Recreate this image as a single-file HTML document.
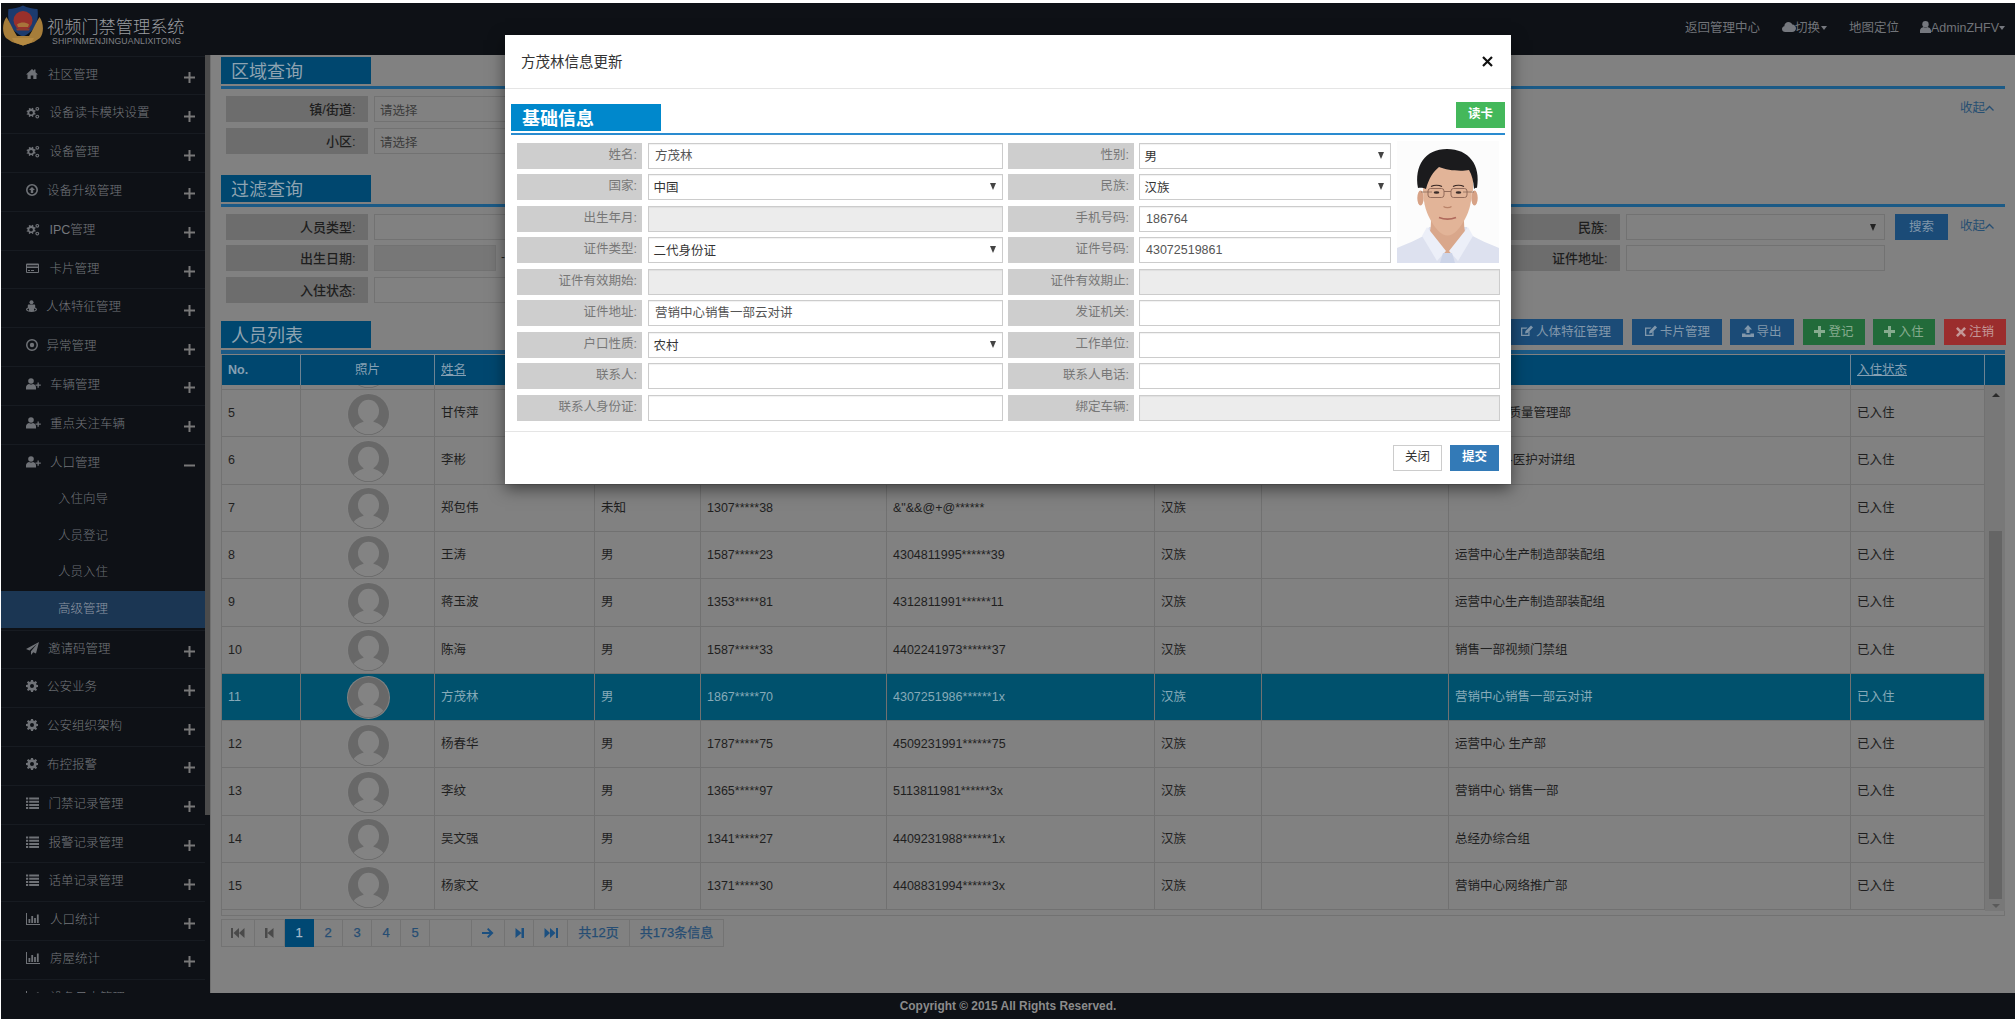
<!DOCTYPE html><html lang="zh-CN"><head><meta charset="utf-8"><title>视频门禁管理系统</title><style>
*{box-sizing:border-box}
html,body{margin:0;padding:0}
body{width:2016px;height:1019px;overflow:hidden;background:#fff;font-family:"Liberation Sans","Noto Sans CJK SC",sans-serif;font-size:12px;position:relative}
.a{position:absolute}
.t{position:absolute;white-space:nowrap}
.nav{color:#717479;font-size:12.5px;line-height:20px;top:18px}
.mi{position:absolute;left:1px;width:204px;height:39px;border-top:1px solid #171b21;color:#74777c;font-size:12.5px;font-weight:300}
.mi .tx{position:absolute;top:9px;line-height:18px;white-space:nowrap}
.mi svg.ic{position:absolute;left:25px;top:11px}
.mi .pl{position:absolute;left:183px;top:15.600px;width:11px;height:11px}
.sub{position:absolute;left:1px;width:204px;height:37px;color:#6b6f75;font-size:12.5px;font-weight:300;line-height:36px;padding-left:57px;white-space:nowrap}
.sub.act{background:#1b3653;color:#8f98a3}
.sec{position:absolute;width:150px;height:27px;background:#00476f;color:#8ea3b1;font-size:18px;line-height:31px;padding-left:10px;white-space:nowrap;overflow:hidden}
.ul{position:absolute;height:2.5px;background:#1b5a86}
.lb{position:absolute;background:#6d6d6d;color:#1e1e1e;font-size:13px;font-weight:500;text-align:right;padding-right:12.5px;white-space:nowrap}
.in{position:absolute;background:#818181;border:1px solid #727272;color:#3c3c3c;font-size:12.5px;padding-left:5px;white-space:nowrap}
.btn{position:absolute;height:26px;line-height:26px;color:#8197ab;font-size:12.5px;text-align:center;white-space:nowrap}
.th{position:absolute;top:355px;height:30px;line-height:31px;color:#86a0b3;font-size:12.5px;border-right:1px solid #6d8393;padding-left:6px;white-space:nowrap;background:#00476f}
.row{position:absolute;left:222px;width:1763px;height:47.3px;border-bottom:1px solid #717171;color:#1f1f1f;font-size:12.5px}
.row.sel{background:#00516d;color:#86aab8}
.c{position:absolute;top:0;height:47.3px;line-height:47.5px;padding-left:6px;border-right:1px solid #717171;white-space:nowrap;overflow:hidden}
.pg{-webkit-text-stroke:0.25px;position:absolute;top:919px;height:28px;line-height:26px;border:1px solid #737373;border-left:none;text-align:center;color:#264d73;font-size:13px;white-space:nowrap}
.ml{position:absolute;background:#cecece;color:#777;font-size:12.5px;text-align:right;padding-right:5px;white-space:nowrap;height:26px;line-height:25px}
.mn{position:absolute;background:#fff;border:1px solid #ccc;color:#555;font-size:12.5px;padding-left:6px;white-space:nowrap;height:26px;line-height:24.500px;overflow:hidden;box-shadow:inset 0 1px 1px rgba(0,0,0,.06)}
.mn.dis{background:#ececec}
.mn.sl{color:#333;line-height:27px;padding-left:4.500px}
.mn .ar{position:absolute;right:6px;top:8px;width:0;height:0;border-left:3.5px solid transparent;border-right:3.5px solid transparent;border-top:7px solid #444}
</style></head><body>
<svg width="0" height="0" style="position:absolute"><defs>
<symbol id="av" viewBox="0 0 42 42"><circle cx="21" cy="21" r="21" fill="#838383"/><circle cx="21" cy="21" r="20" fill="#686868"/><clipPath id="avc"><circle cx="21" cy="21" r="19.300"/></clipPath><g clip-path="url(#avc)" fill="#838383"><ellipse cx="21" cy="17.500" rx="10.300" ry="11"/><path d="M16 26h10v5H16z"/><path d="M4 42c0-9 7-12.500 12-14 1.500 1.500 3 2 5 2s3.500-.5 5-2c5 1.500 12 5 12 14z"/></g></symbol>
<symbol id="plus" viewBox="0 0 11 11"><path d="M4.500 0h2v4.500H11v2H6.500V11h-2V6.500H0v-2h4.500z"/></symbol>
<symbol id="minus" viewBox="0 0 11 11"><path d="M0 4.500h11v2H0z"/></symbol>
</defs></svg>
<div class="a " style="left:1px;top:3px;width:2014px;height:52px;background:#0e1116"></div>
<div class="a " style="left:1px;top:55px;width:208.5px;height:938px;background:#0e1116"></div>
<div class="a " style="left:205px;top:55px;width:4.5px;height:760px;background:#4b4b4b"></div>
<div class="a " style="left:209.5px;top:55px;width:1805.5px;height:938px;background:#818181"></div>
<div class="a " style="left:209.5px;top:55px;width:1.5px;height:938px;background:#707070"></div>
<div class="a " style="left:1px;top:993px;width:2014px;height:26px;background:#0e1116;color:#8b8b8b;font-size:11.900px;font-weight:bold;line-height:27px;text-align:center">Copyright © 2015 All Rights Reserved.</div>
<svg class="a" style="left:3px;top:5px" width="40" height="41" viewBox="0 0 40 41">
<path d="M20 .5C16 3 9.500 3.800 5.500 4 4 15 7 26 20 31.500 33 26 36 15 34.500 4 30.500 3.800 24 3 20 .5z" fill="#1c3b6e"/>
<circle cx="20" cy="15.500" r="9.500" fill="#99302b"/>
<path d="M14 19.500c2-1.500 4-2 6-2s4 .5 6 2l-1 2.500H15z" fill="#a8743a"/>
<path d="M13 23.500h14l-1 2H14z" fill="#8c3a2c"/>
<path d="M3.500 12C-1 18-1 28 3 33l6 4 11 3.500 11-3.500 6-4c4-5 4-15-.5-21-2.500 4-5.500 10-7.500 14l-3 5H14l-3-5C9 22 6 16 3.500 12z" fill="#a67d3a"/>
<path d="M9 33h22l-2.500 4.500L20 40.500l-8.500-3z" fill="#b58a42"/>
</svg>
<div class="t" style="left:47px;top:15px;font-size:17.2px;line-height:24px;color:#9b9da1;letter-spacing:0px;font-weight:300">视频门禁管理系统</div>
<div class="t" style="left:52px;top:36px;font-size:8.700px;line-height:11px;color:#808287;letter-spacing:0.100px">SHIPINMENJINGUANLIXITONG</div>
<div class="t nav" style="left:1685px">返回管理中心</div>
<svg class="a" style="left:1782px;top:21px" width="14" height="11" viewBox="0 0 14 11"><path d="M3.200 11C1.400 11 0 9.700 0 8c0-1.400 1-2.500 2.300-2.800C2.300 2.800 4.200 1 6.500 1c1.700 0 3.200 1 3.800 2.500C12.400 3.600 14 5.200 14 7.200 14 9.300 12.300 11 10.200 11z" fill="#75787e"/></svg>
<div class="t nav" style="left:1795px">切换</div>
<div class="a" style="left:1821px;top:26px;width:0;height:0;border-left:3.500px solid transparent;border-right:3.500px solid transparent;border-top:4px solid #75787e"></div>
<div class="t nav" style="left:1849px">地图定位</div>
<svg class="a" style="left:1920px;top:21px" width="11" height="12" viewBox="0 0 11 12"><circle cx="5.500" cy="3.200" r="3.200" fill="#75787e"/><path d="M0 12V9.500C0 7.500 2 6.300 3.500 6c.6.500 1.300.7 2 .7s1.400-.2 2-.7C9 6.300 11 7.500 11 9.500V12z" fill="#75787e"/></svg>
<div class="t nav" style="left:1931px;font-size:12.500px">AdminZHFV</div>
<div class="a" style="left:1999px;top:26px;width:0;height:0;border-left:3.500px solid transparent;border-right:3.500px solid transparent;border-top:4px solid #75787e"></div>
<div class="mi" style="top:55.5px"><svg class="ic" width="15" height="13" viewBox="0 0 15 13" fill="#6f7277"><path d="M6 1L0 6.500h1.500V11h3.200V7.500h2.600V11h3.200V6.500H12L9.500 4.200V1.500H8v1.300z"/></svg><span class="tx" style="left:47px">社区管理</span><svg class="pl" fill="#787878"><use href="#plus"/></svg></div>
<div class="mi" style="top:94.3px"><svg class="ic" width="15" height="13" viewBox="0 0 15 13" fill="#6f7277"><path fill-rule="evenodd" d="M4.500 2.500l1.200.2.500-1 1.200.5-.2 1.100.9.900 1.100-.2.500 1.200-1 .5v1.300l1 .6-.5 1.200-1.100-.3-.9.900.2 1.100-1.200.5-.5-1H4.500l-.6 1-1.200-.5.300-1.100-.9-.9-1.100.3L.500 8l1-.6V6.100l-1-.5L1 4.400l1.100.2.900-.9-.3-1.100 1.200-.5zM5.100 5A1.800 1.800 0 1 0 5.100 8.600 1.800 1.800 0 0 0 5.100 5z"/><circle cx="11.300" cy="2.800" r="1.900"/><circle cx="11.300" cy="10.600" r="1.900"/><circle cx="11.300" cy="2.800" r=".8" fill="#0e1116"/><circle cx="11.300" cy="10.600" r=".8" fill="#0e1116"/></svg><span class="tx" style="left:48.5px">设备读卡模块设置</span><svg class="pl" fill="#787878"><use href="#plus"/></svg></div>
<div class="mi" style="top:133.1px"><svg class="ic" width="15" height="13" viewBox="0 0 15 13" fill="#6f7277"><path fill-rule="evenodd" d="M4.500 2.500l1.200.2.500-1 1.200.5-.2 1.100.9.900 1.100-.2.500 1.200-1 .5v1.300l1 .6-.5 1.200-1.100-.3-.9.900.2 1.100-1.200.5-.5-1H4.500l-.6 1-1.200-.5.300-1.100-.9-.9-1.100.3L.500 8l1-.6V6.100l-1-.5L1 4.400l1.100.2.900-.9-.3-1.100 1.200-.5zM5.100 5A1.800 1.800 0 1 0 5.100 8.600 1.800 1.800 0 0 0 5.100 5z"/><circle cx="11.300" cy="2.800" r="1.900"/><circle cx="11.300" cy="10.600" r="1.900"/><circle cx="11.300" cy="2.800" r=".8" fill="#0e1116"/><circle cx="11.300" cy="10.600" r=".8" fill="#0e1116"/></svg><span class="tx" style="left:48.5px">设备管理</span><svg class="pl" fill="#787878"><use href="#plus"/></svg></div>
<div class="mi" style="top:171.9px"><svg class="ic" width="15" height="13" viewBox="0 0 15 13" fill="#6f7277"><path fill-rule="evenodd" d="M6 0a6 6 0 1 0 0 12A6 6 0 0 0 6 0zm0 1.600a4.400 4.400 0 1 1 0 8.800 4.400 4.400 0 0 1 0-8.800zM6 3L3 6h1.800v3h2.400V6H9z"/></svg><span class="tx" style="left:46px">设备升级管理</span><svg class="pl" fill="#787878"><use href="#plus"/></svg></div>
<div class="mi" style="top:210.7px"><svg class="ic" width="15" height="13" viewBox="0 0 15 13" fill="#6f7277"><path fill-rule="evenodd" d="M4.500 2.500l1.200.2.500-1 1.200.5-.2 1.100.9.900 1.100-.2.500 1.200-1 .5v1.300l1 .6-.5 1.200-1.100-.3-.9.900.2 1.100-1.200.5-.5-1H4.500l-.6 1-1.200-.5.300-1.100-.9-.9-1.100.3L.500 8l1-.6V6.100l-1-.5L1 4.400l1.100.2.900-.9-.3-1.100 1.200-.5zM5.100 5A1.800 1.800 0 1 0 5.100 8.600 1.800 1.800 0 0 0 5.100 5z"/><circle cx="11.300" cy="2.800" r="1.900"/><circle cx="11.300" cy="10.600" r="1.900"/><circle cx="11.300" cy="2.800" r=".8" fill="#0e1116"/><circle cx="11.300" cy="10.600" r=".8" fill="#0e1116"/></svg><span class="tx" style="left:48.5px">IPC管理</span><svg class="pl" fill="#787878"><use href="#plus"/></svg></div>
<div class="mi" style="top:249.5px"><svg class="ic" width="15" height="13" viewBox="0 0 15 13" fill="#6f7277"><path fill-rule="evenodd" d="M1 1.500h11a1 1 0 0 1 1 1v7.500a1 1 0 0 1-1 1H1a1 1 0 0 1-1-1V2.500a1 1 0 0 1 1-1zM1 3.200v1.300h11V3.200zM1 6v4h11V6zM2 8h2v1H2zm3 0h3v1H5z"/></svg><span class="tx" style="left:48.5px">卡片管理</span><svg class="pl" fill="#787878"><use href="#plus"/></svg></div>
<div class="mi" style="top:288.3px"><svg class="ic" width="15" height="13" viewBox="0 0 15 13" fill="#6f7277"><circle cx="5.500" cy="2.200" r="2"/><path d="M2.800 4.500h5.400c.6 0 1 .4 1 1v3H8v2.500H3V8.500H1.800v-3c0-.6.4-1 1-1z"/><path d="M0 9.500c0-1 1-1.600 2.500-1.900v.9C1.700 8.700 1.200 9 1.200 9.500c0 .8 2 1.500 4.300 1.500s4.300-.7 4.300-1.500c0-.5-.5-.8-1.300-1v-.9C10 7.900 11 8.500 11 9.500c0 1.500-2.500 2.500-5.500 2.500S0 11 0 9.500z"/></svg><span class="tx" style="left:45px">人体特征管理</span><svg class="pl" fill="#787878"><use href="#plus"/></svg></div>
<div class="mi" style="top:327.1px"><svg class="ic" width="15" height="13" viewBox="0 0 15 13" fill="#6f7277"><path fill-rule="evenodd" d="M6 0a6 6 0 1 0 0 12A6 6 0 0 0 6 0zm0 1.500a4.500 4.500 0 1 1 0 9 4.500 4.500 0 0 1 0-9z"/><circle cx="6" cy="6" r="2.200"/></svg><span class="tx" style="left:45.5px">异常管理</span><svg class="pl" fill="#787878"><use href="#plus"/></svg></div>
<div class="mi" style="top:365.9px"><svg class="ic" width="15" height="13" viewBox="0 0 15 13" fill="#6f7277"><circle cx="5" cy="3" r="2.800"/><path d="M0 11.500V9.300C0 7.400 1.800 6.300 3.200 6c.5.400 1.100.600 1.800.600S6.300 6.400 6.800 6C8.200 6.300 10 7.400 10 9.300v2.200z"/><path d="M11.500 4.500h1.300v2h2v1.300h-2v2h-1.300v-2h-2V6.500h2z"/></svg><span class="tx" style="left:49px">车辆管理</span><svg class="pl" fill="#787878"><use href="#plus"/></svg></div>
<div class="mi" style="top:404.7px"><svg class="ic" width="15" height="13" viewBox="0 0 15 13" fill="#6f7277"><circle cx="5" cy="3" r="2.800"/><path d="M0 11.500V9.300C0 7.400 1.800 6.300 3.200 6c.5.400 1.100.600 1.800.600S6.300 6.400 6.800 6C8.200 6.300 10 7.400 10 9.300v2.200z"/><path d="M11.500 4.500h1.300v2h2v1.300h-2v2h-1.300v-2h-2V6.500h2z"/></svg><span class="tx" style="left:49px">重点关注车辆</span><svg class="pl" fill="#787878"><use href="#plus"/></svg></div>
<div class="mi" style="top:443.5px"><svg class="ic" width="15" height="13" viewBox="0 0 15 13" fill="#6f7277"><circle cx="5" cy="3" r="2.800"/><path d="M0 11.500V9.300C0 7.400 1.800 6.300 3.200 6c.5.400 1.100.600 1.800.600S6.300 6.400 6.800 6C8.200 6.300 10 7.400 10 9.300v2.200z"/><path d="M11.500 4.500h1.300v2h2v1.300h-2v2h-1.300v-2h-2V6.500h2z"/></svg><span class="tx" style="left:49px">人口管理</span><svg class="pl" fill="#787878"><use href="#minus"/></svg></div>
<div class="sub" style="top:481.0px">入住向导</div>
<div class="sub" style="top:517.7px">人员登记</div>
<div class="sub" style="top:554.4px">人员入住</div>
<div class="sub act" style="top:591.1px">高级管理</div>
<div class="mi" style="top:629.5px"><svg class="ic" width="15" height="13" viewBox="0 0 15 13" fill="#6f7277"><path d="M13 0L0 7l3.500 1.500L11 2 5 9.300V13l2.300-2.800L10 11.500z"/></svg><span class="tx" style="left:47px">邀请码管理</span><svg class="pl" fill="#787878"><use href="#plus"/></svg></div>
<div class="mi" style="top:668.3px"><svg class="ic" width="15" height="13" viewBox="0 0 15 13" fill="#6f7277"><path fill-rule="evenodd" d="M5 0h2l.3 1.600 1 .4L9.700 1l1.400 1.400L10 3.700l.4 1L12 5v2l-1.600.3-.4 1 1.100 1.400L9.700 11 8.300 10l-1 .4L7 12H5l-.3-1.600-1-.4L2.300 11 .9 9.700 2 8.300l-.4-1L0 7V5l1.600-.3.4-1L.9 2.400 2.300 1l1.400 1 1-.4zM6 4a2 2 0 1 0 0 4 2 2 0 0 0 0-4z"/></svg><span class="tx" style="left:46px">公安业务</span><svg class="pl" fill="#787878"><use href="#plus"/></svg></div>
<div class="mi" style="top:707.1px"><svg class="ic" width="15" height="13" viewBox="0 0 15 13" fill="#6f7277"><path fill-rule="evenodd" d="M5 0h2l.3 1.600 1 .4L9.700 1l1.400 1.400L10 3.700l.4 1L12 5v2l-1.600.3-.4 1 1.100 1.400L9.700 11 8.300 10l-1 .4L7 12H5l-.3-1.600-1-.4L2.300 11 .9 9.700 2 8.300l-.4-1L0 7V5l1.600-.3.4-1L.9 2.400 2.300 1l1.400 1 1-.4zM6 4a2 2 0 1 0 0 4 2 2 0 0 0 0-4z"/></svg><span class="tx" style="left:46px">公安组织架构</span><svg class="pl" fill="#787878"><use href="#plus"/></svg></div>
<div class="mi" style="top:745.9px"><svg class="ic" width="15" height="13" viewBox="0 0 15 13" fill="#6f7277"><path fill-rule="evenodd" d="M5 0h2l.3 1.600 1 .4L9.700 1l1.400 1.400L10 3.700l.4 1L12 5v2l-1.600.3-.4 1 1.100 1.400L9.700 11 8.300 10l-1 .4L7 12H5l-.3-1.600-1-.4L2.300 11 .9 9.700 2 8.300l-.4-1L0 7V5l1.600-.3.4-1L.9 2.400 2.300 1l1.400 1 1-.4zM6 4a2 2 0 1 0 0 4 2 2 0 0 0 0-4z"/></svg><span class="tx" style="left:46px">布控报警</span><svg class="pl" fill="#787878"><use href="#plus"/></svg></div>
<div class="mi" style="top:784.7px"><svg class="ic" width="15" height="13" viewBox="0 0 15 13" fill="#6f7277"><path d="M0 .5h2.200v2H0zm3.200 0H13v2H3.200zM0 3.700h2.200v2H0zm3.200 0H13v2H3.200zM0 6.900h2.200v2H0zm3.200 0H13v2H3.200zM0 10.100h2.200v2H0zm3.200 0H13v2H3.200z"/></svg><span class="tx" style="left:47.5px">门禁记录管理</span><svg class="pl" fill="#787878"><use href="#plus"/></svg></div>
<div class="mi" style="top:823.5px"><svg class="ic" width="15" height="13" viewBox="0 0 15 13" fill="#6f7277"><path d="M0 .5h2.200v2H0zm3.200 0H13v2H3.200zM0 3.700h2.200v2H0zm3.200 0H13v2H3.200zM0 6.900h2.200v2H0zm3.200 0H13v2H3.200zM0 10.100h2.200v2H0zm3.200 0H13v2H3.200z"/></svg><span class="tx" style="left:47.5px">报警记录管理</span><svg class="pl" fill="#787878"><use href="#plus"/></svg></div>
<div class="mi" style="top:862.3px"><svg class="ic" width="15" height="13" viewBox="0 0 15 13" fill="#6f7277"><path d="M0 .5h2.200v2H0zm3.200 0H13v2H3.200zM0 3.700h2.200v2H0zm3.200 0H13v2H3.200zM0 6.900h2.200v2H0zm3.200 0H13v2H3.200zM0 10.100h2.200v2H0zm3.200 0H13v2H3.200z"/></svg><span class="tx" style="left:47.5px">话单记录管理</span><svg class="pl" fill="#787878"><use href="#plus"/></svg></div>
<div class="mi" style="top:901.1px"><svg class="ic" width="15" height="13" viewBox="0 0 15 13" fill="#6f7277"><path d="M0 0h1v11h13v1H0zM2.500 6h1.800v4H2.500zM5.300 3h1.800v7H5.300zM8.100 5h1.800v5H8.100zM10.900 1.500h1.800V10h-1.800z"/></svg><span class="tx" style="left:49px">人口统计</span><svg class="pl" fill="#787878"><use href="#plus"/></svg></div>
<div class="mi" style="top:939.9px"><svg class="ic" width="15" height="13" viewBox="0 0 15 13" fill="#6f7277"><path d="M0 0h1v11h13v1H0zM2.500 6h1.800v4H2.500zM5.300 3h1.800v7H5.300zM8.100 5h1.800v5H8.100zM10.900 1.500h1.800V10h-1.800z"/></svg><span class="tx" style="left:49px">房屋统计</span><svg class="pl" fill="#787878"><use href="#plus"/></svg></div>
<div class="mi" style="top:978.7px"><svg class="ic" width="15" height="13" viewBox="0 0 15 13" fill="#6f7277"><path d="M0 0h1v11h13v1H0zM2.500 6h1.800v4H2.500zM5.300 3h1.800v7H5.300zM8.100 5h1.800v5H8.100zM10.900 1.500h1.800V10h-1.800z"/></svg><span class="tx" style="left:49px">设备日志管理</span><svg class="pl" fill="#787878"><use href="#plus"/></svg></div>
<div class="a " style="left:1px;top:993px;width:204px;height:26px;background:#0e1116"></div>
<div class="sec" style="left:221px;top:57px">区域查询</div>
<div class="ul" style="left:221px;top:86px;width:1784px"></div>
<div class="sec" style="left:221px;top:175px">过滤查询</div>
<div class="ul" style="left:221px;top:204px;width:1784px"></div>
<div class="sec" style="left:221px;top:321px">人员列表</div>
<div class="ul" style="left:221px;top:350.300px;width:1784px;height:3.700px"></div>
<div class="lb" style="left:226px;top:96px;width:142px;height:26px;line-height:27.5px;overflow:hidden">镇/街道:</div>
<div class="in" style="left:374px;top:96px;width:260px;height:26px;line-height:28px;overflow:hidden;">请选择</div>
<div class="lb" style="left:226px;top:128px;width:142px;height:26px;line-height:27.5px;overflow:hidden">小区:</div>
<div class="in" style="left:374px;top:128px;width:260px;height:26px;line-height:28px;overflow:hidden;">请选择</div>
<div class="lb" style="left:226px;top:214px;width:142px;height:26px;line-height:27.5px;overflow:hidden">人员类型:</div>
<div class="in" style="left:374px;top:214px;width:260px;height:26px;line-height:28px;overflow:hidden;"></div>
<div class="lb" style="left:226px;top:245px;width:142px;height:26px;line-height:27.5px;overflow:hidden">出生日期:</div>
<div class="in" style="left:374px;top:245px;width:122px;height:26px;line-height:28px;overflow:hidden;background:#777"></div>
<div class="t" style="left:501px;top:250px;color:#222">-</div>
<div class="in" style="left:510px;top:245px;width:124px;height:26px;line-height:28px;overflow:hidden;background:#777"></div>
<div class="lb" style="left:226px;top:277px;width:142px;height:26px;line-height:27.5px;overflow:hidden">入住状态:</div>
<div class="in" style="left:374px;top:277px;width:260px;height:26px;line-height:28px;overflow:hidden;"></div>
<div class="lb" style="left:1380px;top:214px;width:240px;height:26px;line-height:27.5px;overflow:hidden">民族:</div>
<div class="in" style="left:1626px;top:214px;width:259px;height:26px;line-height:28px;overflow:hidden;"></div>
<div class="a" style="left:1870px;top:224px;width:0;height:0;border-left:3.500px solid transparent;border-right:3.500px solid transparent;border-top:7px solid #222"></div>
<div class="lb" style="left:1380px;top:245px;width:240px;height:26px;line-height:27.5px;overflow:hidden">证件地址:</div>
<div class="in" style="left:1626px;top:245px;width:259px;height:26px;line-height:28px;overflow:hidden;"></div>
<div class="btn" style="left:1895px;top:214px;width:53px;height:26px;line-height:26px;background:#1b4b77">搜索</div>
<div class="t" style="left:1960px;top:99px;color:#274f72;font-size:12.5px;line-height:18px">收起</div>
<svg class="a" style="left:1985px;top:105px" width="9" height="6" viewBox="0 0 9 6"><path d="M.5 5.500L4.500 1.500 8.500 5.500" fill="none" stroke="#274f72" stroke-width="1.300"/></svg>
<div class="t" style="left:1960px;top:217px;color:#274f72;font-size:12.5px;line-height:18px">收起</div>
<svg class="a" style="left:1985px;top:223px" width="9" height="6" viewBox="0 0 9 6"><path d="M.5 5.500L4.500 1.500 8.500 5.500" fill="none" stroke="#274f72" stroke-width="1.300"/></svg>
<div class="btn" style="left:1508px;top:318.500px;width:115px;background:#1b4b77"><svg width="13" height="12" viewBox="0 0 13 12" style="vertical-align:-1px;margin-right:3px"><path d="M1 2.500h6.500l-1.300 1.300H2.300v6h6V7.300l1.300-1.300V11H1z" fill="#8197ab"/><path d="M5 8.500L5.500 6 11 .5 13 2.500 7.500 8z" fill="#8197ab"/></svg>人体特征管理</div>
<div class="btn" style="left:1632px;top:318.500px;width:90px;background:#1b4b77"><svg width="13" height="12" viewBox="0 0 13 12" style="vertical-align:-1px;margin-right:3px"><path d="M1 2.500h6.500l-1.300 1.300H2.300v6h6V7.300l1.300-1.300V11H1z" fill="#8197ab"/><path d="M5 8.500L5.500 6 11 .5 13 2.500 7.500 8z" fill="#8197ab"/></svg>卡片管理</div>
<div class="btn" style="left:1730px;top:318.500px;width:64px;background:#1b4b77"><svg width="12" height="12" viewBox="0 0 12 12" style="vertical-align:-1px;margin-right:2px"><path d="M6 0l4 4.500H7.500V8h-3V4.500H2z" fill="#8197ab"/><path d="M0 8.500h3.500V9.500h5V8.500H12V12H0z" fill="#8197ab"/></svg>导出</div>
<div class="btn" style="left:1803px;top:318.500px;width:62px;background:#226b3a;color:#86ab8e"><svg width="11" height="11" viewBox="0 0 11 11" style="vertical-align:-1px;margin-right:3px"><path d="M4 0h3v4h4v3H7v4H4V7H0V4h4z" fill="#86ab8e"/></svg>登记</div>
<div class="btn" style="left:1873px;top:318.500px;width:62px;background:#226b3a;color:#86ab8e"><svg width="11" height="11" viewBox="0 0 11 11" style="vertical-align:-1px;margin-right:3px"><path d="M4 0h3v4h4v3H7v4H4V7H0V4h4z" fill="#86ab8e"/></svg>入住</div>
<div class="btn" style="left:1944px;top:318.500px;width:62px;background:#9b2d2d;color:#c49797"><svg width="10" height="10" viewBox="0 0 10 10" style="vertical-align:-1px;margin-right:3px"><path d="M1.800 0L5 3.200 8.200 0 10 1.800 6.800 5 10 8.200 8.200 10 5 6.800 1.800 10 0 8.200 3.200 5 0 1.800z" fill="#c49797"/></svg>注销</div>
<div class="a " style="left:221px;top:355px;width:1784px;height:561px;border:1px solid #727272"></div>
<div class="th" style="left:222px;width:79px;font-weight:bold;">No.</div>
<div class="th" style="left:301px;width:134px;text-align:center;padding-left:0;">照片</div>
<div class="th" style="left:435px;width:160px;"><u>姓名</u></div>
<div class="th" style="left:595px;width:106px;"><u>性别</u></div>
<div class="th" style="left:701px;width:186px;"><u>手机号码</u></div>
<div class="th" style="left:887px;width:268px;"><u>证件号码</u></div>
<div class="th" style="left:1155px;width:107px;"><u>民族</u></div>
<div class="th" style="left:1262px;width:187px;"><u>出生日期</u></div>
<div class="th" style="left:1449px;width:402px;"><u>证件地址</u></div>
<div class="th" style="left:1851px;width:134px;"><u>入住状态</u></div>
<div class="a " style="left:1985px;top:355px;width:20px;height:30px;background:#00476f"></div>
<div class="a" style="left:222px;top:385px;width:1763px;height:5px;overflow:hidden"><div style="position:absolute;top:-42px;left:-222px">
<div class="row" style="top:0.0px;"><div class="c" style="left:0px;width:79px">4</div><div class="c" style="left:79px;width:134px;padding:0"><svg width="43" height="43" style="position:absolute;left:46.0px;top:2.500px"><use href="#av"/></svg></div><div class="c" style="left:213px;width:160px"></div><div class="c" style="left:373px;width:106px"></div><div class="c" style="left:479px;width:186px"></div><div class="c" style="left:665px;width:268px"></div><div class="c" style="left:933px;width:107px"></div><div class="c" style="left:1040px;width:187px"></div><div class="c" style="left:1227px;width:402px"></div><div class="c" style="left:1629px;width:134px">已入住</div></div>
</div></div>
<div class="row" style="top:390.1px;"><div class="c" style="left:0px;width:79px">5</div><div class="c" style="left:79px;width:134px;padding:0"><svg width="43" height="43" style="position:absolute;left:46.0px;top:2.500px"><use href="#av"/></svg></div><div class="c" style="left:213px;width:160px">甘传萍</div><div class="c" style="left:373px;width:106px">男</div><div class="c" style="left:479px;width:186px">1367*****12</div><div class="c" style="left:665px;width:268px">4305211989******58</div><div class="c" style="left:933px;width:107px">汉族</div><div class="c" style="left:1040px;width:187px"></div><div class="c" style="left:1227px;width:402px"><span style="padding-left:3.500px">运营中心质量管理部</span></div><div class="c" style="left:1629px;width:134px">已入住</div></div>
<div class="row" style="top:437.4px;"><div class="c" style="left:0px;width:79px">6</div><div class="c" style="left:79px;width:134px;padding:0"><svg width="43" height="43" style="position:absolute;left:46.0px;top:2.500px"><use href="#av"/></svg></div><div class="c" style="left:213px;width:160px">李彬</div><div class="c" style="left:373px;width:106px">男</div><div class="c" style="left:479px;width:186px">1592*****46</div><div class="c" style="left:665px;width:268px">4306241990******17</div><div class="c" style="left:933px;width:107px">汉族</div><div class="c" style="left:1040px;width:187px"></div><div class="c" style="left:1227px;width:402px"><span style="padding-left:3.500px">销售一部-医护对讲组</span></div><div class="c" style="left:1629px;width:134px">已入住</div></div>
<div class="row" style="top:484.7px;"><div class="c" style="left:0px;width:79px">7</div><div class="c" style="left:79px;width:134px;padding:0"><svg width="43" height="43" style="position:absolute;left:46.0px;top:2.500px"><use href="#av"/></svg></div><div class="c" style="left:213px;width:160px">郑包伟</div><div class="c" style="left:373px;width:106px">未知</div><div class="c" style="left:479px;width:186px">1307*****38</div><div class="c" style="left:665px;width:268px">&amp;&quot;&amp;&amp;@+@******</div><div class="c" style="left:933px;width:107px">汉族</div><div class="c" style="left:1040px;width:187px"></div><div class="c" style="left:1227px;width:402px"></div><div class="c" style="left:1629px;width:134px">已入住</div></div>
<div class="row" style="top:532.0px;"><div class="c" style="left:0px;width:79px">8</div><div class="c" style="left:79px;width:134px;padding:0"><svg width="43" height="43" style="position:absolute;left:46.0px;top:2.500px"><use href="#av"/></svg></div><div class="c" style="left:213px;width:160px">王涛</div><div class="c" style="left:373px;width:106px">男</div><div class="c" style="left:479px;width:186px">1587*****23</div><div class="c" style="left:665px;width:268px">4304811995******39</div><div class="c" style="left:933px;width:107px">汉族</div><div class="c" style="left:1040px;width:187px"></div><div class="c" style="left:1227px;width:402px">运营中心生产制造部装配组</div><div class="c" style="left:1629px;width:134px">已入住</div></div>
<div class="row" style="top:579.3px;"><div class="c" style="left:0px;width:79px">9</div><div class="c" style="left:79px;width:134px;padding:0"><svg width="43" height="43" style="position:absolute;left:46.0px;top:2.500px"><use href="#av"/></svg></div><div class="c" style="left:213px;width:160px">蒋玉波</div><div class="c" style="left:373px;width:106px">男</div><div class="c" style="left:479px;width:186px">1353*****81</div><div class="c" style="left:665px;width:268px">4312811991******11</div><div class="c" style="left:933px;width:107px">汉族</div><div class="c" style="left:1040px;width:187px"></div><div class="c" style="left:1227px;width:402px">运营中心生产制造部装配组</div><div class="c" style="left:1629px;width:134px">已入住</div></div>
<div class="row" style="top:626.5px;"><div class="c" style="left:0px;width:79px">10</div><div class="c" style="left:79px;width:134px;padding:0"><svg width="43" height="43" style="position:absolute;left:46.0px;top:2.500px"><use href="#av"/></svg></div><div class="c" style="left:213px;width:160px">陈海</div><div class="c" style="left:373px;width:106px">男</div><div class="c" style="left:479px;width:186px">1587*****33</div><div class="c" style="left:665px;width:268px">4402241973******37</div><div class="c" style="left:933px;width:107px">汉族</div><div class="c" style="left:1040px;width:187px"></div><div class="c" style="left:1227px;width:402px">销售一部视频门禁组</div><div class="c" style="left:1629px;width:134px">已入住</div></div>
<div class="row sel" style="top:673.8px;"><div class="c" style="left:0px;width:79px">11</div><div class="c" style="left:79px;width:134px;padding:0"><svg width="43" height="43" style="position:absolute;left:46.0px;top:2.500px"><use href="#av"/></svg></div><div class="c" style="left:213px;width:160px">方茂林</div><div class="c" style="left:373px;width:106px">男</div><div class="c" style="left:479px;width:186px">1867*****70</div><div class="c" style="left:665px;width:268px">4307251986******1x</div><div class="c" style="left:933px;width:107px">汉族</div><div class="c" style="left:1040px;width:187px"></div><div class="c" style="left:1227px;width:402px">营销中心销售一部云对讲</div><div class="c" style="left:1629px;width:134px">已入住</div></div>
<div class="row" style="top:721.1px;"><div class="c" style="left:0px;width:79px">12</div><div class="c" style="left:79px;width:134px;padding:0"><svg width="43" height="43" style="position:absolute;left:46.0px;top:2.500px"><use href="#av"/></svg></div><div class="c" style="left:213px;width:160px">杨春华</div><div class="c" style="left:373px;width:106px">男</div><div class="c" style="left:479px;width:186px">1787*****75</div><div class="c" style="left:665px;width:268px">4509231991******75</div><div class="c" style="left:933px;width:107px">汉族</div><div class="c" style="left:1040px;width:187px"></div><div class="c" style="left:1227px;width:402px">运营中心 生产部</div><div class="c" style="left:1629px;width:134px">已入住</div></div>
<div class="row" style="top:768.4px;"><div class="c" style="left:0px;width:79px">13</div><div class="c" style="left:79px;width:134px;padding:0"><svg width="43" height="43" style="position:absolute;left:46.0px;top:2.500px"><use href="#av"/></svg></div><div class="c" style="left:213px;width:160px">李纹</div><div class="c" style="left:373px;width:106px">男</div><div class="c" style="left:479px;width:186px">1365*****97</div><div class="c" style="left:665px;width:268px">5113811981******3x</div><div class="c" style="left:933px;width:107px">汉族</div><div class="c" style="left:1040px;width:187px"></div><div class="c" style="left:1227px;width:402px">营销中心 销售一部</div><div class="c" style="left:1629px;width:134px">已入住</div></div>
<div class="row" style="top:815.7px;"><div class="c" style="left:0px;width:79px">14</div><div class="c" style="left:79px;width:134px;padding:0"><svg width="43" height="43" style="position:absolute;left:46.0px;top:2.500px"><use href="#av"/></svg></div><div class="c" style="left:213px;width:160px">吴文强</div><div class="c" style="left:373px;width:106px">男</div><div class="c" style="left:479px;width:186px">1341*****27</div><div class="c" style="left:665px;width:268px">4409231988******1x</div><div class="c" style="left:933px;width:107px">汉族</div><div class="c" style="left:1040px;width:187px"></div><div class="c" style="left:1227px;width:402px">总经办综合组</div><div class="c" style="left:1629px;width:134px">已入住</div></div>
<div class="row" style="top:863.0px;"><div class="c" style="left:0px;width:79px">15</div><div class="c" style="left:79px;width:134px;padding:0"><svg width="43" height="43" style="position:absolute;left:46.0px;top:2.500px"><use href="#av"/></svg></div><div class="c" style="left:213px;width:160px">杨家文</div><div class="c" style="left:373px;width:106px">男</div><div class="c" style="left:479px;width:186px">1371*****30</div><div class="c" style="left:665px;width:268px">4408831994******3x</div><div class="c" style="left:933px;width:107px">汉族</div><div class="c" style="left:1040px;width:187px"></div><div class="c" style="left:1227px;width:402px">营销中心网络推广部</div><div class="c" style="left:1629px;width:134px">已入住</div></div>
<div class="a " style="left:1985px;top:385px;width:20px;height:526px;background:#787878"></div>
<div class="a " style="left:1989px;top:531px;width:13px;height:368px;background:#656565"></div>
<div class="a" style="left:1992px;top:393px;width:0;height:0;border-left:4px solid transparent;border-right:4px solid transparent;border-bottom:4px solid #2a2a2a"></div>
<div class="a" style="left:1992px;top:904px;width:0;height:0;border-left:4px solid transparent;border-right:4px solid transparent;border-top:4px solid #5a5a5a"></div>
<div class="pg" style="left:221px;width:34px;border-left:1px solid #737373;"><svg width="14" height="10" viewBox="0 0 14 10" fill="#4a4a4a" style="vertical-align:-1px"><path d="M0 0h2v10H0zM8 0v10L2.500 5zM13.500 0v10L8 5z"/></svg></div>
<div class="pg" style="left:255px;width:30px;"><svg width="9" height="10" viewBox="0 0 9 10" fill="#4a4a4a" style="vertical-align:-1px"><path d="M0 0h2.500v10H0zM8.500 0v10L2.500 5z"/></svg></div>
<div class="pg" style="left:285px;width:29px;background:#004873;color:#a5b9c9;border-color:#004873;">1</div>
<div class="pg" style="left:314px;width:29px;">2</div>
<div class="pg" style="left:343px;width:29px;">3</div>
<div class="pg" style="left:372px;width:29px;">4</div>
<div class="pg" style="left:401px;width:29px;">5</div>
<div class="pg" style="left:430px;width:42px;"></div>
<div class="pg" style="left:472px;width:33px;"><svg width="12" height="10" viewBox="0 0 12 10" fill="#1c5080" style="vertical-align:-1px"><path d="M0 4h7.500L5 1.300 6.300 0 11.500 5 6.300 10 5 8.700 7.500 6H0z"/></svg></div>
<div class="pg" style="left:505px;width:29px;"><svg width="9" height="10" viewBox="0 0 9 10" fill="#1c5080" style="vertical-align:-1px"><path d="M6.500 0H9v10H6.500zM.5 0v10L6.500 5z"/></svg></div>
<div class="pg" style="left:534px;width:34px;"><svg width="14" height="10" viewBox="0 0 14 10" fill="#1c5080" style="vertical-align:-1px"><path d="M12 0h2v10h-2zM6 0v10L11.500 5zM.5 0v10L6 5z"/></svg></div>
<div class="pg" style="left:568px;width:62px;">共12页</div>
<div class="pg" style="left:630px;width:94px;">共173条信息</div>
<div class="a " style="left:505px;top:35px;width:1006px;height:449px;background:#fff;box-shadow:0 5px 15px rgba(0,0,0,.5)"></div>
<div class="t" style="left:521px;top:52px;font-size:14.500px;line-height:20px;color:#333">方茂林信息更新</div>
<svg class="a" style="left:1482px;top:56px" width="11" height="11" viewBox="0 0 11 11"><path d="M1 1L10 10M10 1L1 10" stroke="#111" stroke-width="2.200"/></svg>
<div class="a " style="left:505px;top:88px;width:1006px;height:1px;background:#e5e5e5"></div>
<div class="a" style="left:511px;top:104px;width:150px;height:27px;background:#0088cc;color:#fff;font-size:18px;font-weight:bold;line-height:30px;padding-left:11px;white-space:nowrap;overflow:hidden">基础信息</div>
<div class="a " style="left:511px;top:133px;width:994px;height:2px;background:#2a8bd0"></div>
<div class="a" style="left:1456px;top:102px;width:49px;height:26px;background:#44b85b;color:#fff;font-size:12.500px;font-weight:bold;line-height:25px;text-align:center">读卡</div>
<div class="ml" style="left:517px;top:142.7px;width:125px">姓名:</div>
<div class="mn " style="left:648px;top:142.7px;width:355px">方茂林</div>
<div class="ml" style="left:1008px;top:142.7px;width:126px">性别:</div>
<div class="mn sl" style="left:1139px;top:142.7px;width:252px">男<i class=ar></i></div>
<div class="ml" style="left:517px;top:174.2px;width:125px">国家:</div>
<div class="mn sl" style="left:648px;top:174.2px;width:355px">中国<i class=ar></i></div>
<div class="ml" style="left:1008px;top:174.2px;width:126px">民族:</div>
<div class="mn sl" style="left:1139px;top:174.2px;width:252px">汉族<i class=ar></i></div>
<div class="ml" style="left:517px;top:205.7px;width:125px">出生年月:</div>
<div class="mn dis" style="left:648px;top:205.7px;width:355px"></div>
<div class="ml" style="left:1008px;top:205.7px;width:126px">手机号码:</div>
<div class="mn " style="left:1139px;top:205.7px;width:252px">186764</div>
<div class="ml" style="left:517px;top:237.2px;width:125px">证件类型:</div>
<div class="mn sl" style="left:648px;top:237.2px;width:355px">二代身份证<i class=ar></i></div>
<div class="ml" style="left:1008px;top:237.2px;width:126px">证件号码:</div>
<div class="mn " style="left:1139px;top:237.2px;width:252px">43072519861</div>
<div class="ml" style="left:517px;top:268.7px;width:125px">证件有效期始:</div>
<div class="mn dis" style="left:648px;top:268.7px;width:355px"></div>
<div class="ml" style="left:1008px;top:268.7px;width:126px">证件有效期止:</div>
<div class="mn dis" style="left:1139px;top:268.7px;width:361px"></div>
<div class="ml" style="left:517px;top:300.2px;width:125px">证件地址:</div>
<div class="mn " style="left:648px;top:300.2px;width:355px">营销中心销售一部云对讲</div>
<div class="ml" style="left:1008px;top:300.2px;width:126px">发证机关:</div>
<div class="mn " style="left:1139px;top:300.2px;width:361px"></div>
<div class="ml" style="left:517px;top:331.7px;width:125px">户口性质:</div>
<div class="mn sl" style="left:648px;top:331.7px;width:355px">农村<i class=ar></i></div>
<div class="ml" style="left:1008px;top:331.7px;width:126px">工作单位:</div>
<div class="mn " style="left:1139px;top:331.7px;width:361px"></div>
<div class="ml" style="left:517px;top:363.2px;width:125px">联系人:</div>
<div class="mn " style="left:648px;top:363.2px;width:355px"></div>
<div class="ml" style="left:1008px;top:363.2px;width:126px">联系人电话:</div>
<div class="mn " style="left:1139px;top:363.2px;width:361px"></div>
<div class="ml" style="left:517px;top:394.7px;width:125px">联系人身份证:</div>
<div class="mn " style="left:648px;top:394.7px;width:355px"></div>
<div class="ml" style="left:1008px;top:394.7px;width:126px">绑定车辆:</div>
<div class="mn dis" style="left:1139px;top:394.7px;width:361px"></div>
<svg class="a" style="left:1397px;top:141px" width="102" height="122" viewBox="0 0 102 122">
<rect width="102" height="122" fill="#fcfcfc"/>
<path d="M0 122v-15c9-4 20-8 28-13l4-8h38l4 8c8 5 19 9 28 13v15z" fill="#dde1ef"/>
<path d="M34 78c0 10-1 15-4 19l20.500 18L71 97c-3-4-4-9-4-19z" fill="#d9a78b"/>
<path d="M30 86l-5 9 15 25 9-10zM71 86l5 9-15 25-9-10z" fill="#eceff8"/>
<path d="M46 112h9l3 10H43z" fill="#ccd4e8"/>
<ellipse cx="23.500" cy="57" rx="3.200" ry="7.500" fill="#d7a286"/><ellipse cx="77.500" cy="57" rx="3.200" ry="7.500" fill="#d7a286"/>
<path d="M26 50V30c0-5 10-8 24.500-8S76 25 76 30v20z" fill="#e2b498"/>
<path d="M26 46c0-15 10-23 24.500-23S75 31 75 46c0 13-2 23-7 32-5 9-11 16.500-17.500 16.500S38 87 33 78c-5-9-7-19-7-32z" fill="#e2b498"/>
<path d="M21 47c-4-22 7-39 29-39s34 16 30 39c-1-.5-2 0-3 1-.5-8-2-14-5-19-8 1.500-22 .5-30-3-6 5-10 11-13 22-2-1-5-1.500-8-1z" fill="#1b1b1d"/>
<path d="M24 51h11M66 51h11" stroke="#8a6a58" stroke-width=".8"/>
<rect x="31" y="47.500" width="16" height="9" rx="2.500" fill="none" stroke="#8a6352" stroke-width=".9"/><rect x="54" y="47.500" width="16" height="9" rx="2.500" fill="none" stroke="#8a6352" stroke-width=".9"/><path d="M47 50.500h7" stroke="#8a6352" stroke-width=".9"/>
<path d="M34 45.500c3-1.500 8-1.500 11 0M56 45.500c3-1.500 8-1.500 11 0" stroke="#3a2a26" stroke-width="1.300" fill="none"/>
<ellipse cx="39.500" cy="51.500" rx="2.800" ry="1.300" fill="#3a2c2a"/><ellipse cx="61.500" cy="51.500" rx="2.800" ry="1.300" fill="#3a2c2a"/>
<path d="M46.500 65.500c2 1.500 6 1.500 8 0" stroke="#b98268" stroke-width="1.200" fill="none"/>
<path d="M42 76.500c5 2 12 2 17 0" stroke="#b06a5c" stroke-width="1.800" fill="none"/>
</svg>
<div class="a " style="left:505px;top:431px;width:1006px;height:1px;background:#e5e5e5"></div>
<div class="a" style="left:1393px;top:445px;width:49px;height:26px;background:#fff;border:1px solid #ccc;color:#333;font-size:12.500px;line-height:23px;text-align:center">关闭</div>
<div class="a" style="left:1450px;top:445px;width:49px;height:26px;background:#337ab7;color:#fff;font-size:12.500px;font-weight:bold;line-height:24px;text-align:center">提交</div>
</body></html>
